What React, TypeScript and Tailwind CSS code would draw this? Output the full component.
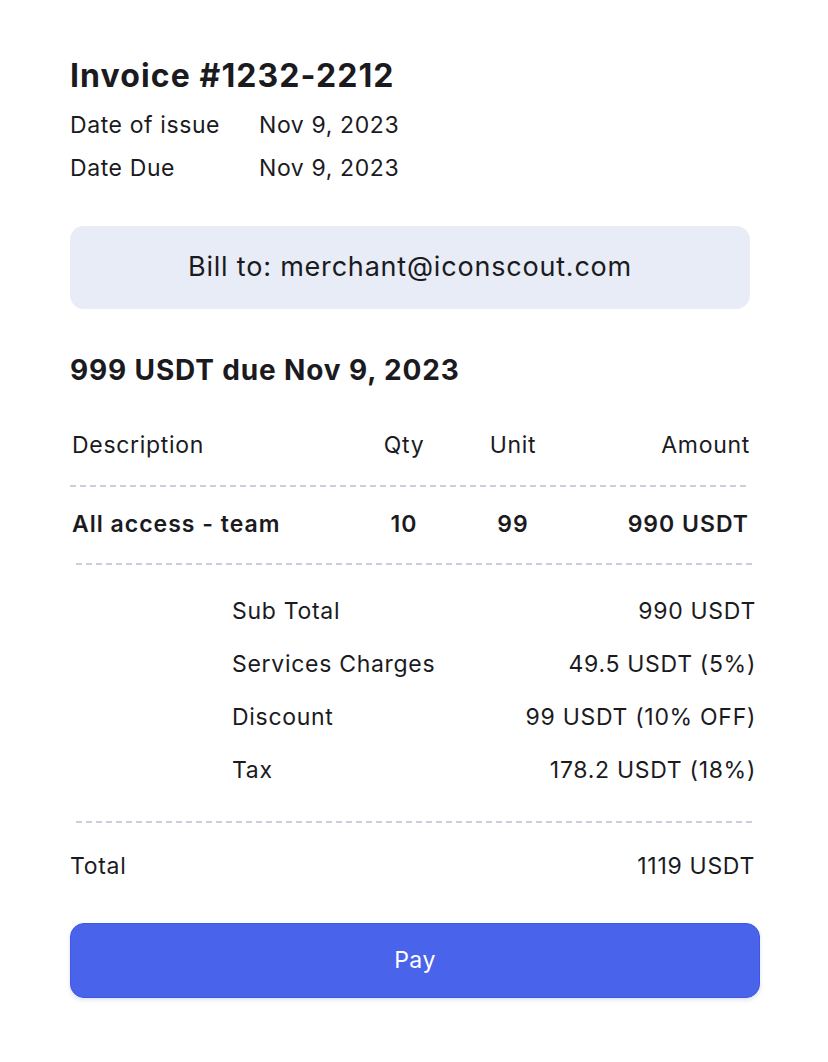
const dash =
  "h-[2px] bg-[linear-gradient(to_right,#c9cfdc_60%,transparent_0)] bg-[length:10px_2px] bg-repeat-x";

const summary = [
  { label: "Sub Total", value: "990 USDT" },
  { label: "Services Charges", value: "49.5 USDT (5%)" },
  { label: "Discount", value: "99 USDT (10% OFF)" },
  { label: "Tax", value: "178.2 USDT (18%)" },
];

const App = () => {
  return (
    <div
      className="min-h-[1062px] w-[828px] bg-white text-[#1b1b1f]"
      style={{ fontFamily: "Inter, 'Noto Sans', sans-serif" }}
    >
      <div className="flex flex-col pt-[58px] pl-[70px]">
        <h1 className="h-[36px] text-[32px] leading-[36px] font-bold tracking-[1.1px]">
          Invoice #1232-2212
        </h1>

        <div className="mt-[10px] flex flex-col text-[23px] tracking-[0.6px]">
          <div className="flex h-[43px] items-center">
            <span className="w-[189px]">Date of issue</span>
            <span>Nov 9, 2023</span>
          </div>
          <div className="flex h-[43px] items-center">
            <span className="w-[189px]">Date Due</span>
            <span>Nov 9, 2023</span>
          </div>
        </div>

        <div className="mt-[36px] flex h-[83px] w-[680px] items-center justify-center rounded-[14px] bg-[#e8ecf6] text-[27px] tracking-[0.8px]">
          Bill to: merchant@iconscout.com
        </div>

        <h2 className="mt-[44px] h-[34px] text-[28px] leading-[34px] font-bold tracking-[0.85px]">
          999 USDT due Nov 9, 2023
        </h2>

        <div className="mt-[38px] ml-[2px] grid h-[40px] w-[678px] grid-cols-[290px_84px_134px_1fr] items-center text-[23px] tracking-[0.7px]">
          <span>Description</span>
          <span className="text-center">Qty</span>
          <span className="text-center">Unit</span>
          <span className="text-right">Amount</span>
        </div>

        <div className={`${dash} mt-[20px] w-[680px]`} />

        <div className="mt-[17px] ml-[2px] grid h-[40px] w-[677px] grid-cols-[290px_84px_134px_1fr] items-center text-[23px] font-semibold tracking-[1px]">
          <span>All access - team</span>
          <span className="text-center">10</span>
          <span className="text-center">99</span>
          <span className="text-right">990 USDT</span>
        </div>

        <div className={`${dash} mt-[19px] ml-[6px] w-[680px]`} />

        <div className="mt-[20px] ml-[162px] flex w-[524px] flex-col text-[23px] tracking-[0.7px]">
          {summary.map((row) => (
            <div key={row.label} className="flex h-[53px] items-center justify-between">
              <span>{row.label}</span>
              <span>{row.value}</span>
            </div>
          ))}
        </div>

        <div className={`${dash} mt-[24px] ml-[6px] w-[680px]`} />

        <div className="mt-[23px] flex h-[40px] w-[685px] items-center justify-between text-[23px] tracking-[0.7px]">
          <span>Total</span>
          <span>1119 USDT</span>
        </div>

        <button className="mt-[37px] flex h-[75px] w-[690px] items-center justify-center rounded-[14px] border border-[#3f57e0] bg-[#4a63eb] text-[23px] tracking-[0.5px] text-white shadow-[0_2px_4px_rgba(40,60,180,0.15)]">
          Pay
        </button>
      </div>
    </div>
  );
};

export default App;
